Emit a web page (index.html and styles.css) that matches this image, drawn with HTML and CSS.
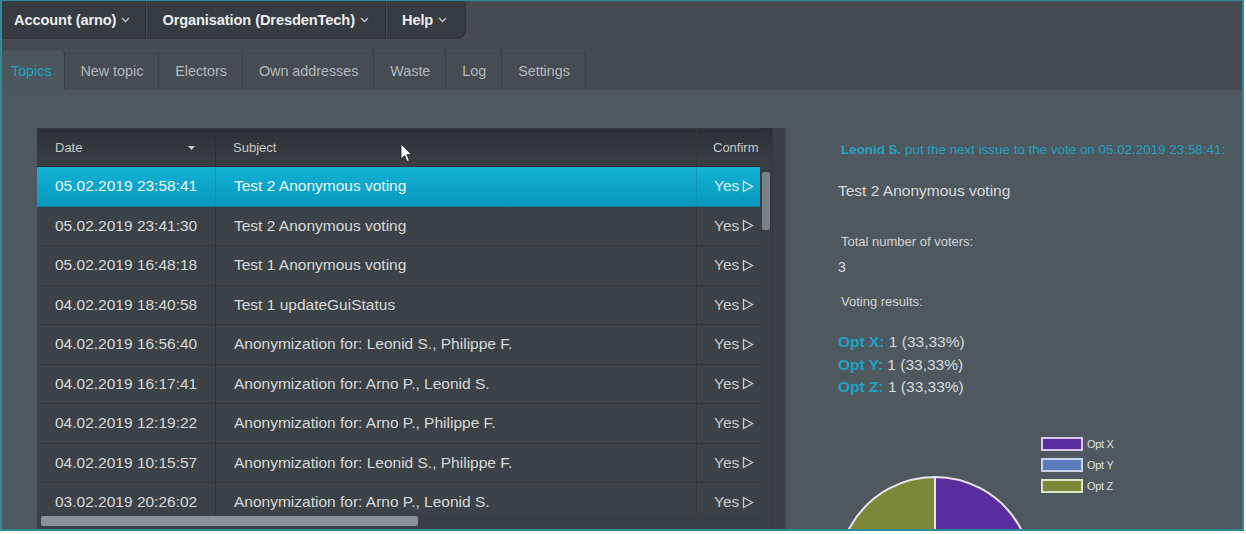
FILE: index.html
```html
<!DOCTYPE html>
<html>
<head>
<meta charset="utf-8">
<link rel="stylesheet" href="styles.css">
</head>
<body>
<div class="frame">
  <div class="top">
    <nav class="menubar">
      <div class="menu-item">Account (arno)<svg class="chev" width="9" height="6" viewBox="0 0 9 6"><path d="M1 1 L4.5 4.5 L8 1" fill="none" stroke="#c4c8cb" stroke-width="1.3"/></svg></div>
      <div class="menu-item">Organisation (DresdenTech)<svg class="chev" width="9" height="6" viewBox="0 0 9 6"><path d="M1 1 L4.5 4.5 L8 1" fill="none" stroke="#c4c8cb" stroke-width="1.3"/></svg></div>
      <div class="menu-item last">Help<svg class="chev" width="9" height="6" viewBox="0 0 9 6"><path d="M1 1 L4.5 4.5 L8 1" fill="none" stroke="#c4c8cb" stroke-width="1.3"/></svg></div>
    </nav>
    <div class="tabs">
      <div class="tab active">Topics</div>
      <div class="tab">New topic</div>
      <div class="tab">Electors</div>
      <div class="tab">Own addresses</div>
      <div class="tab">Waste</div>
      <div class="tab">Log</div>
      <div class="tab">Settings</div>
    </div>
  </div>
  <div class="content">
    <div class="table-wrap">
      <div class="grid">
        <div class="thead">
          <div class="th c-date">Date<svg class="sort" width="7" height="4" viewBox="0 0 7 4"><path d="M0 0 L7 0 L3.5 4 Z" fill="#c9cdd0"/></svg></div>
          <div class="th c-subj">Subject<svg class="cursor" width="13" height="20" viewBox="0 0 13 20"><path d="M1 1 L1 16 L4.5 12.5 L7.2 18.5 L9.4 17.5 L6.8 11.6 L11.5 11.6 Z" fill="#ffffff" stroke="#222" stroke-width="0.8"/></svg></div>
          <div class="th c-conf">Confirm</div>
        </div>
        <div class="tbody">
          <div class="row selected"><div class="td c-date">05.02.2019 23:58:41</div><div class="td c-subj">Test 2 Anonymous voting</div><div class="td c-conf">Yes<svg class="tri" width="12" height="13" viewBox="0 0 12 13"><path d="M1.5 1.5 L10.5 6.5 L1.5 11.5 Z" fill="none" stroke="currentColor" stroke-width="1.3"/></svg></div></div>
          <div class="row"><div class="td c-date">05.02.2019 23:41:30</div><div class="td c-subj">Test 2 Anonymous voting</div><div class="td c-conf">Yes<svg class="tri" width="12" height="13" viewBox="0 0 12 13"><path d="M1.5 1.5 L10.5 6.5 L1.5 11.5 Z" fill="none" stroke="currentColor" stroke-width="1.3"/></svg></div></div>
          <div class="row"><div class="td c-date">05.02.2019 16:48:18</div><div class="td c-subj">Test 1 Anonymous voting</div><div class="td c-conf">Yes<svg class="tri" width="12" height="13" viewBox="0 0 12 13"><path d="M1.5 1.5 L10.5 6.5 L1.5 11.5 Z" fill="none" stroke="currentColor" stroke-width="1.3"/></svg></div></div>
          <div class="row"><div class="td c-date">04.02.2019 18:40:58</div><div class="td c-subj">Test 1 updateGuiStatus</div><div class="td c-conf">Yes<svg class="tri" width="12" height="13" viewBox="0 0 12 13"><path d="M1.5 1.5 L10.5 6.5 L1.5 11.5 Z" fill="none" stroke="currentColor" stroke-width="1.3"/></svg></div></div>
          <div class="row"><div class="td c-date">04.02.2019 16:56:40</div><div class="td c-subj">Anonymization for: Leonid S., Philippe F.</div><div class="td c-conf">Yes<svg class="tri" width="12" height="13" viewBox="0 0 12 13"><path d="M1.5 1.5 L10.5 6.5 L1.5 11.5 Z" fill="none" stroke="currentColor" stroke-width="1.3"/></svg></div></div>
          <div class="row"><div class="td c-date">04.02.2019 16:17:41</div><div class="td c-subj">Anonymization for: Arno P., Leonid S.</div><div class="td c-conf">Yes<svg class="tri" width="12" height="13" viewBox="0 0 12 13"><path d="M1.5 1.5 L10.5 6.5 L1.5 11.5 Z" fill="none" stroke="currentColor" stroke-width="1.3"/></svg></div></div>
          <div class="row"><div class="td c-date">04.02.2019 12:19:22</div><div class="td c-subj">Anonymization for: Arno P., Philippe F.</div><div class="td c-conf">Yes<svg class="tri" width="12" height="13" viewBox="0 0 12 13"><path d="M1.5 1.5 L10.5 6.5 L1.5 11.5 Z" fill="none" stroke="currentColor" stroke-width="1.3"/></svg></div></div>
          <div class="row"><div class="td c-date">04.02.2019 10:15:57</div><div class="td c-subj">Anonymization for: Leonid S., Philippe F.</div><div class="td c-conf">Yes<svg class="tri" width="12" height="13" viewBox="0 0 12 13"><path d="M1.5 1.5 L10.5 6.5 L1.5 11.5 Z" fill="none" stroke="currentColor" stroke-width="1.3"/></svg></div></div>
          <div class="row"><div class="td c-date">03.02.2019 20:26:02</div><div class="td c-subj">Anonymization for: Arno P., Leonid S.</div><div class="td c-conf">Yes<svg class="tri" width="12" height="13" viewBox="0 0 12 13"><path d="M1.5 1.5 L10.5 6.5 L1.5 11.5 Z" fill="none" stroke="currentColor" stroke-width="1.3"/></svg></div></div>
        </div>
        <div class="hscroll"><div class="hthumb"></div></div>
      </div>
      <div class="vcol">
        <div class="vhead"></div>
        <div class="vtrack"><div class="vthumb"></div></div>
      </div>
      <div class="strip"></div>
    </div>
    <div class="panel">
      <div class="announce"><b>Leonid S.</b> put the next issue to the vote on 05.02.2019 23:58:41:</div>
      <div class="title">Test 2 Anonymous voting</div>
      <div class="label first">Total number of voters:</div>
      <div class="value">3</div>
      <div class="label second">Voting results:</div>
      <div class="results">
        <div class="res"><span class="opt">Opt X:</span> 1 (33,33%)</div>
        <div class="res"><span class="opt">Opt Y:</span> 1 (33,33%)</div>
        <div class="res"><span class="opt">Opt Z:</span> 1 (33,33%)</div>
      </div>
      <div class="chart">
        <svg class="pie" width="198" height="198" viewBox="0 0 198 198">
          <path d="M99 99 L99 2 A97 97 0 0 1 183 147.5 Z" fill="#5a2e9e" stroke="#e8e4ee" stroke-width="2"/>
          <path d="M99 99 L183 147.5 A97 97 0 0 1 15 147.5 Z" fill="#5a7cbc" stroke="#e8e4ee" stroke-width="2"/>
          <path d="M99 99 L15 147.5 A97 97 0 0 1 99 2 Z" fill="#7a8838" stroke="#e8e4ee" stroke-width="2"/>
        </svg>
        <div class="legend">
          <div class="leg"><span class="swatch sx"></span>Opt X</div>
          <div class="leg"><span class="swatch sy"></span>Opt Y</div>
          <div class="leg"><span class="swatch sz"></span>Opt Z</div>
        </div>
      </div>
    </div>
  </div>
</div>
</body>
</html>
```
FILE: styles.css
```css
* { box-sizing: border-box; }
html, body { margin: 0; padding: 0; background: #ffffff; }
body { font-family: "Liberation Sans", Arial, sans-serif; }

.frame {
  width: 1244px;
  height: 531px;
  border: 2px solid #2f8a98;
  border-top-width: 1px;
  background: #454b51;
  display: flex;
  flex-direction: column;
  overflow: hidden;
}

.top { flex: none; }

.menubar {
  display: flex;
  width: 463px;
  height: 37px;
  background: #373c41;
  border-radius: 0 0 9px 0;
  box-shadow: 1px 1px 0 #2f3337;
}
.menu-item {
  display: flex;
  align-items: center;
  padding: 0 15px 0 12px;
  color: #eceeef;
  font-size: 14.6px;
  font-weight: bold;
  letter-spacing: -0.1px;
  border-right: 1px solid #2c3034;
  box-shadow: 1px 0 0 #43484d;
}
.menu-item + .menu-item { padding-left: 16px; padding-right: 16px; }
.menu-item.last { border-right: none; box-shadow: none; }
.chev { margin-left: 5px; margin-top: 1px; }

.tabs {
  display: flex;
  height: 40px;
  margin-top: 12px;
}
.tab {
  display: flex;
  align-items: center;
  padding: 0 15px 0 16px;
  font-size: 14.3px;
  color: #b4b9bd;
  background: #464c51;
  border-right: 1px solid #3a3f44;
  border-top: 1px solid #4c5358;
  border-radius: 4px 4px 0 0;
}
.tab.active {
  color: #1ba6c6;
  background: #4e575d;
  padding: 0 12px 0 9px;
}

.content {
  flex: 1;
  display: flex;
  background: #4f585e;
  padding-top: 38px;
  padding-left: 35px;
  min-height: 0;
}

.table-wrap {
  display: flex;
  height: 100%;
  flex: none;
}
.grid {
  width: 723px;
  display: flex;
  flex-direction: column;
  background: #3d4246;
  border-top: 1px solid #33373b;
}
.thead {
  display: flex;
  height: 38px;
  flex: none;
  background: linear-gradient(#2d3135, #3b4044);
  border-bottom: 1px solid #2a2e31;
}
.th {
  display: flex;
  align-items: center;
  font-size: 13px;
  color: #c6cacd;
  position: relative;
}
.c-date { width: 179px; padding-left: 18px; border-right: 1px solid #2c3033; }
.c-subj { width: 481px; padding-left: 17px; border-right: 1px solid #33373a; }
.c-conf { width: 63px; padding-left: 16px; overflow: hidden; white-space: nowrap; }
.th.c-date .sort { margin-left: auto; margin-right: 20px; }
.cursor { position: absolute; left: 184px; top: 14px; }

.tbody { flex: 1; overflow: hidden; min-height: 0; }
.row {
  display: flex;
  height: 39.5px;
  border-bottom: 1px solid #34383b;
  color: #d7dadc;
  font-size: 15.5px;
}
.row.selected {
  background: linear-gradient(#12b2d6, #0898bd);
  color: #e9f6fa;
  border-bottom-color: #087f9e;
}
.td { display: flex; align-items: center; white-space: nowrap; }
.td.c-date { border-right-color: #303437; }
.td.c-subj { padding-left: 18px; }
.row.selected .td { border-right-color: #0c92b4; }
.td.c-conf { color: #c9cdd0; padding-left: 17px; }
.row.selected .td.c-conf { color: #d6f1f8; }
.tri { margin-left: 3px; flex: none; }

.hscroll {
  height: 15px;
  flex: none;
  background: #3a3f43;
  padding: 2px 0 3px 4px;
}
.hthumb {
  width: 377px;
  height: 10px;
  background: #8c9196;
  border-radius: 2px;
}

.vcol {
  width: 12px;
  display: flex;
  flex-direction: column;
  background: #3a3f43;
}
.vhead { height: 39px; background: linear-gradient(#2d3135, #3b4044); }
.vtrack { flex: 1; padding: 5px 2px 0 2px; }
.vthumb { height: 58px; background: #7b8085; border-radius: 2px; }

.strip {
  width: 15px;
  background: #3b4044;
  border-left: 1px solid #34383c;
  border-right: 2px solid #464c51;
}

.panel {
  flex: 1;
  display: flex;
  flex-direction: column;
  padding-top: 14px;
  padding-left: 51px;
  color: #d7dadc;
  overflow: hidden;
}
.announce {
  font-size: 13.4px;
  line-height: 16px;
  color: #1ea4c2;
  padding-left: 3px;
  white-space: nowrap;
}
.title { font-size: 15.5px; line-height: 18px; margin-top: 24px; }
.label { font-size: 13px; line-height: 16px; padding-left: 3px; color: #d2d5d7; }
.label.first { margin-top: 34px; }
.label.second { margin-top: 18px; }
.value { font-size: 14px; line-height: 18px; margin-top: 8px; }
.results { margin-top: 21px; }
.res { font-size: 15.5px; line-height: 22.5px; }
.opt { color: #1ea4c2; font-weight: bold; }

.chart {
  display: flex;
  align-items: flex-start;
  margin-top: 38px;
}
.pie { margin-top: 38px; margin-left: -2px; flex: none; }
.legend { margin-left: 7px; display: flex; flex-direction: column; gap: 7px; }
.leg { display: flex; align-items: center; font-size: 11px; color: #dfe1e3; height: 14px; letter-spacing: -0.3px; }
.swatch {
  width: 42px;
  height: 14px;
  margin-right: 4px;
  border: 2px solid #dcd6e6;
}
.sx { background: #5a2e9e; border-color: #d8c8ec; }
.sy { background: #5a7cbc; border-color: #c8d4ea; }
.sz { background: #7a8838; border-color: #dfe2c4; }
```
